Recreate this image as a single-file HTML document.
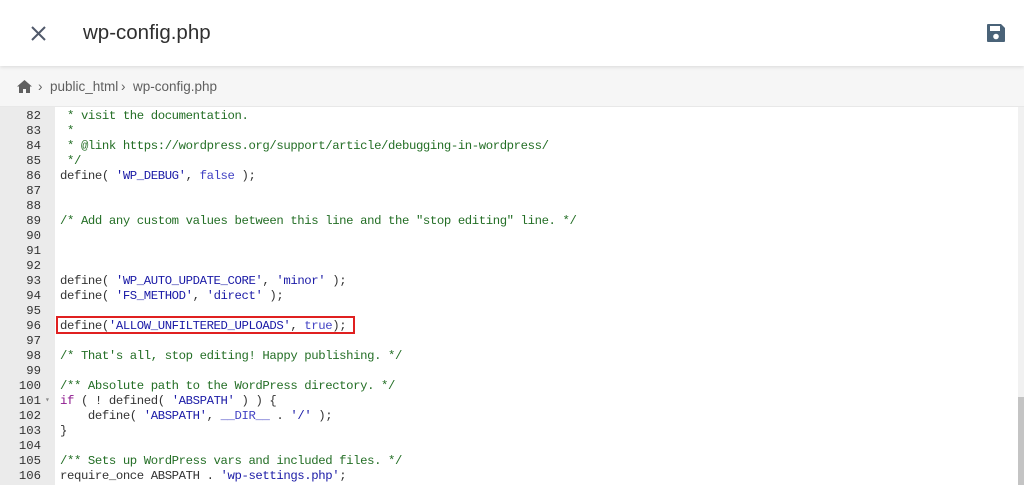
<!DOCTYPE html>
<html><head><meta charset="utf-8"><style>
*{margin:0;padding:0;box-sizing:border-box}
body{width:1024px;height:485px;overflow:hidden;background:#fff;font-family:"Liberation Sans",sans-serif;position:relative}
.hdr{position:absolute;left:0;top:0;width:1024px;height:66px;background:#fff;box-shadow:0 1px 4px rgba(0,0,0,.12);z-index:2}
.title{position:absolute;left:83px;top:21px;font-size:20.5px;color:#2f2f2f}
.bc{position:absolute;left:0;top:66px;width:1024px;height:41px;background:#f6f6f6;border-bottom:1px solid #e8e8e8}
.bc span{position:absolute;top:13px;font-size:13.5px;color:#5f5f5f}
.ed{position:absolute;left:0;top:107px;width:1024px;height:378px;background:#fff;overflow:hidden}
.gut{position:absolute;left:0;top:0;width:55px;height:378px;background:#ebebeb}
.code{position:absolute;left:0;top:2px;font-family:"Liberation Mono",monospace;font-size:12.3px;letter-spacing:-0.4px;line-height:15px}
.l{height:15px;position:relative;width:1000px}
.n{position:absolute;left:0;width:41px;text-align:right;color:#333;letter-spacing:0}
.t{position:absolute;left:60px;color:#333;white-space:pre}
.c{color:#236e25}.s{color:#1a1aa6}.k{color:#4343c4}.p{color:#8e1a8e}
.box{position:absolute;left:56px;top:316px;width:299px;height:18px;border:2px solid #e02020}
.sb{position:absolute;left:1018px;top:107px;width:6px;height:378px;background:#f1f1f1}
.th{position:absolute;left:1018px;top:397px;width:6px;height:88px;background:#c4c4c4}
</style></head><body>
<div class="hdr">
<svg style="position:absolute;left:31px;top:26px" width="15" height="15" viewBox="0 0 15 15"><path d="M1 1L14 14M14 1L1 14" stroke="#50596a" stroke-width="2"/></svg>
<div class="title">wp-config.php</div>
<svg style="position:absolute;left:986px;top:23px" width="20" height="20" viewBox="0 0 20 20"><path d="M2 1h13l4 4v13a1 1 0 0 1-1 1H2a1 1 0 0 1-1-1V2a1 1 0 0 1 1-1z" fill="#4a6378"/><rect x="4" y="3" width="10" height="5" fill="#fff"/><circle cx="10" cy="13.5" r="2.8" fill="#fff"/></svg>
</div>
<div class="bc">
<svg style="position:absolute;left:17px;top:14px" width="15" height="13" viewBox="0 0 15 13"><path d="M7.5 0L0 6.5h2V13h4V9h3v4h4V6.5h2z" fill="#5f5f5f"/></svg>
<span style="left:38px">›</span>
<span style="left:50px">public_html</span>
<span style="left:121px">›</span>
<span style="left:133px">wp-config.php</span>
</div>
<div class="ed"><div class="gut"></div>
<div class="code">
<div class="l"><span class="n">82</span><span class="t c"> * visit the documentation.</span></div>
<div class="l"><span class="n">83</span><span class="t c"> *</span></div>
<div class="l"><span class="n">84</span><span class="t c"> * @link https://wordpress.org/support/article/debugging-in-wordpress/</span></div>
<div class="l"><span class="n">85</span><span class="t c"> */</span></div>
<div class="l"><span class="n">86</span><span class="t">define( <span class="s">'WP_DEBUG'</span>, <span class="k">false</span> );</span></div>
<div class="l"><span class="n">87</span></div>
<div class="l"><span class="n">88</span></div>
<div class="l"><span class="n">89</span><span class="t c">/* Add any custom values between this line and the "stop editing" line. */</span></div>
<div class="l"><span class="n">90</span></div>
<div class="l"><span class="n">91</span></div>
<div class="l"><span class="n">92</span></div>
<div class="l"><span class="n">93</span><span class="t">define( <span class="s">'WP_AUTO_UPDATE_CORE'</span>, <span class="s">'minor'</span> );</span></div>
<div class="l"><span class="n">94</span><span class="t">define( <span class="s">'FS_METHOD'</span>, <span class="s">'direct'</span> );</span></div>
<div class="l"><span class="n">95</span></div>
<div class="l"><span class="n">96</span><span class="t">define(<span class="s">'ALLOW_UNFILTERED_UPLOADS'</span>, <span class="k">true</span>);</span></div>
<div class="l"><span class="n">97</span></div>
<div class="l"><span class="n">98</span><span class="t c">/* That's all, stop editing! Happy publishing. */</span></div>
<div class="l"><span class="n">99</span></div>
<div class="l"><span class="n">100</span><span class="t c">/** Absolute path to the WordPress directory. */</span></div>
<div class="l"><span class="n">101</span><span style="position:absolute;left:45px;top:-1px;font-size:8px;color:#888">▾</span><span class="t"><span class="p">if</span> ( ! defined( <span class="s">'ABSPATH'</span> ) ) {</span></div>
<div class="l"><span class="n">102</span><span class="t">    define( <span class="s">'ABSPATH'</span>, <span class="k">__DIR__</span> . <span class="s">'/'</span> );</span></div>
<div class="l"><span class="n">103</span><span class="t">}</span></div>
<div class="l"><span class="n">104</span></div>
<div class="l"><span class="n">105</span><span class="t c">/** Sets up WordPress vars and included files. */</span></div>
<div class="l"><span class="n">106</span><span class="t">require_once ABSPATH . <span class="s">'wp-settings.php'</span>;</span></div>
</div></div>
<div class="box"></div>
<div class="sb"></div><div class="th"></div>
</body></html>
